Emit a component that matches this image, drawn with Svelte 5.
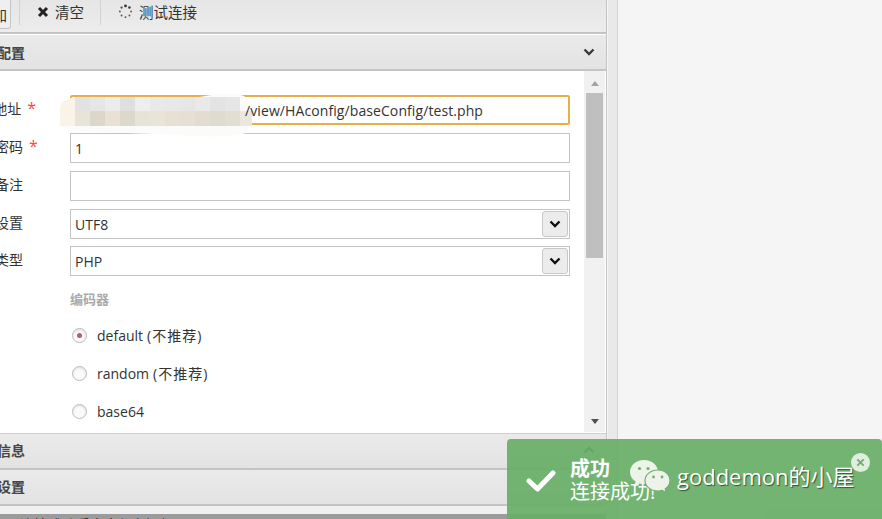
<script>
  const fields = [
    { label: 'URL地址', required: true, value: '', focus: true },
    { label: '连接密码', required: true, value: '1' },
    { label: '网站备注', value: '' },
  ];
  const selects = [
    { label: '编码设置', value: 'UTF8' },
    { label: '连接类型', value: 'PHP' },
  ];
  const encoders = [
    { name: 'default', note: '(不推荐)', checked: true },
    { name: 'random', note: '(不推荐)' },
    { name: 'base64' },
  ];
  // mosaic used to hide the address in the screenshot
  const top = ['#e2e2e2', '#e6e6e6', '#ececec', '#dfdfdf', '#eeeeee', '#e9e9e9', '#e8e8e8', '#e6e6e6', '#e9e9e9', '#e3e3e3', '#e6e6e6'];
  const bottom = ['#e8e4da', '#ddd7cb', '#e8e1d4', '#ddd8cc', '#e8e3d8', '#e9e4d8', '#e7e1d4', '#e6e0d4', '#e3ddd1', '#e0dbcf', '#e3ded2', '#ebe7de'];
</script>

{#snippet chevron(color, up)}
  <svg class="chev" class:up viewBox="0 0 12 8" width="12" height="8"><path d="M1.5 1.5 L6 6 L10.5 1.5" fill="none" stroke={color} stroke-width="2.4" /></svg>
{/snippet}

<div class="page">
  <div class="panel">
    <div class="toolbar">
      <button class="tool first">保存添加</button>
      <span class="sep"></span>
      <button class="tool">
        <svg viewBox="0 0 12 12" width="12" height="12"><path d="M2 2 L10 10 M10 2 L2 10" stroke="#222" stroke-width="3" /></svg>
        清空
      </button>
      <span class="sep"></span>
      <button class="tool">
        <svg viewBox="0 0 16 16" width="15" height="15">
          <circle cx="8" cy="2" r="1.5" fill="#333" /><circle cx="12.2" cy="3.8" r="1.3" fill="#333" />
          <circle cx="14" cy="8" r="1" fill="#555" /><circle cx="12.2" cy="12.2" r="1" fill="#555" />
          <circle cx="8" cy="14" r="1" fill="#555" /><circle cx="3.8" cy="12.2" r="1" fill="#555" />
          <circle cx="2" cy="8" r="1" fill="#555" /><circle cx="3.8" cy="3.8" r="1.2" fill="#444" />
        </svg>
        测试连接
      </button>
    </div>

    <div class="head open"><span>基础配置</span>{@render chevron('#3a3a3a', false)}</div>

    <div class="body">
      <div class="form">
        {#each fields as f}
          <div class="row">
            <label>{f.label}{#if f.required}<i>*</i>{/if}</label>
            <input class:focus={f.focus} value={f.value} />
          </div>
        {/each}
        {#each selects as s}
          <div class="row">
            <label>{s.label}</label>
            <div class="select">
              <span>{s.value}</span>
              <span class="drop">{@render chevron('#111', false)}</span>
            </div>
          </div>
        {/each}
        <div class="group">
          <div class="group-title">编码器</div>
          {#each encoders as e}
            <div class="radio">
              <span class="dot" class:on={e.checked}></span>
              <span>{e.name}{#if e.note}<span class="note">{e.note}</span>{/if}</span>
            </div>
          {/each}
        </div>
      </div>
      <div class="scroll">
        <span class="arrow up"></span>
        <span class="thumb"></span>
        <span class="arrow down"></span>
      </div>
    </div>

    <div class="head other"><span>其他信息</span>{@render chevron('#3a3a3a', true)}</div>
    <div class="head second"><span>高级设置</span></div>
    <div class="strip"></div>
    <div class="footer">连接成功后点击保存添加</div>
  </div>

  <div class="gutter"></div>

  <svg class="mosaic" viewBox="0 0 192 50" width="192" height="50">
    <path d="M6 8 Q0 8 0 14 L0 32 Q6 38 40 39 L120 42 Q170 46 186 40 Q191 36 191 28 L191 14 Q190 2 175 1 Q160 0 140 4 L60 4 L15 4 Z" fill="#fbfbfa" />
    <path d="M0 14 Q2 6 15 4 L15 33 L0 33 Z" fill="#faf4e8" />
    {#each top as c, i}
      <rect x={15 + i * 15} y="4" width="15" height="14" fill={c} />
    {/each}
    {#each bottom as c, i}
      <rect x={15 + i * 15} y="18" width="15" height="15" fill={c} />
    {/each}
  </svg>
  <div class="url">/view/HAconfig/baseConfig/test.php</div>

  <div class="toast">
    <svg class="check" viewBox="0 0 30 24" width="30" height="24"><path d="M3 12 L11.5 20 L27 4" fill="none" stroke="#fff" stroke-width="5" stroke-linecap="round" stroke-linejoin="round" /></svg>
    <div class="msg">
      <strong>成功</strong>
      <span>连接成功!</span>
    </div>
    <span class="close">
      <svg viewBox="0 0 10 10" width="9" height="9"><path d="M1.5 1.5 L8.5 8.5 M8.5 1.5 L1.5 8.5" stroke="#6fb06f" stroke-width="2.2" /></svg>
    </span>
  </div>

  <div class="mark">
    <svg viewBox="0 0 40 34" width="40" height="34">
      <path d="M14 1 C6 1 0 6.5 0 13 C0 17 2.2 20.4 5.6 22.6 L4.4 27 L9.6 24.4 C11 24.8 12.4 25 14 25 C22 25 28 19.5 28 13 C28 6.5 22 1 14 1 Z" fill="#eef3ea" />
      <circle cx="9.5" cy="9.5" r="1.6" fill="#6fb06f" /><circle cx="18" cy="9.5" r="1.6" fill="#6fb06f" />
      <path d="M28 11 C20.6 11 15 15.8 15 21.5 C15 27.2 20.6 32 28 32 C29.4 32 30.8 31.8 32 31.4 L36.4 33.6 L35.2 30 C38 28 40 25 40 21.5 C40 15.8 35 11 28 11 Z" fill="#eef3ea" stroke="#6fb06f" stroke-width="1.2" />
      <circle cx="23.5" cy="18" r="1.4" fill="#6fb06f" /><circle cx="32" cy="18" r="1.4" fill="#6fb06f" />
    </svg>
    <span>goddemon的小屋</span>
  </div>
</div>

<style>
  :global(body) { margin: 0; }

  .page {
    position: relative;
    display: flex;
    width: 882px;
    height: 519px;
    overflow: hidden;
    background: #f5f5f5;
    font-family: "Open Sans", "Noto Sans CJK SC", sans-serif;
    font-size: 14px;
    color: #333;
  }

  .panel {
    flex: none;
    width: 647px;
    margin-left: -40px;
    display: flex;
    flex-direction: column;
    background: #fff;
    border-right: 1px solid #c4c4c4;
    box-sizing: border-box;
  }

  .gutter {
    flex: none;
    width: 9px;
    background: #e9e9e9;
    border-right: 1px solid #d4d4d4;
    margin-left: 1px;
  }

  .toolbar {
    height: 34px;
    box-sizing: border-box;
    display: flex;
    align-items: flex-start;
    background: linear-gradient(#e6e6e6, #ececec);
    border-bottom: 2px solid #c4c4c4;
    flex: none;
  }

  .tool {
    display: flex;
    align-items: center;
    gap: 6px;
    height: 23px;
    border: 0;
    background: none;
    padding: 0;
    font: inherit;
    font-size: 14.5px;
    color: #333;
  }
  .tool.first {
    width: 51px;
    height: 29px;
    border: 1px solid #c4c4c4;
    border-top: 0;
    border-radius: 0 0 3px 3px;
    padding-right: 3px;
    overflow: hidden;
    white-space: nowrap;
    justify-content: flex-end;
    background: #efefef;
  }

  .sep { width: 1px; height: 25px; background: #cfd3d3; margin-left: 8px; }
  .sep + .tool { margin-left: 17px; }
  .tool + .sep + .tool + .sep { margin-left: 16px; }

  .head {
    flex: none;
    height: 37px;
    padding: 0 11px 2px 9px;
    box-sizing: border-box;
    display: flex;
    align-items: center;
    justify-content: space-between;
    background: linear-gradient(#eaeaea, #e3e3e3);
    border-bottom: 2px solid #c4c4c4;
    font-weight: 700;
    color: #444;
  }
  .head.open { height: 36px; margin-top: 1px; padding-bottom: 0; }
  .head.other { margin-top: 1px; border-top: 1px solid #d0d0d0; }
  .head.second { height: 36px; }

  .chev.up { transform: rotate(180deg); }

  .body {
    flex: none;
    height: 361px;
    display: flex;
    overflow: hidden;
  }

  .form {
    width: 624px;
    padding: 24px 0 0 7px;
    box-sizing: border-box;
    flex: none;
  }

  .row {
    display: flex;
    align-items: center;
    height: 30px;
    margin-bottom: 8px;
  }
  .row:nth-child(4) { margin-bottom: 7px; }
  .row label { width: 103px; flex: none; white-space: nowrap; margin-top: -4px; }
  .row label i { color: #f44; font-style: normal; margin-left: 6px; font-size: 16px; }

  .row input, .select {
    width: 500px;
    height: 30px;
    box-sizing: border-box;
    border: 1px solid #c4c4c4;
    background: #fff;
    padding: 0 4px;
    font: inherit;
    color: #333;
    outline: 0;
  }
  .row input.focus { border: 2px solid #e8b04a; border-radius: 2px; }

  .select { display: flex; align-items: center; justify-content: space-between; padding-right: 1px; }
  .drop {
    width: 24px;
    height: 24px;
    display: flex;
    align-items: center;
    justify-content: center;
    background: #ececec;
    border: 1px solid #c8c8c8;
    border-radius: 3px;
  }

  .group { padding-left: 103px; margin-top: 14px; }
  .group-title { font-weight: 700; color: #aaa; font-size: 13px; margin-bottom: 17px; line-height: 18px; }

  .radio { display: flex; align-items: center; gap: 10px; height: 20px; margin-bottom: 18px; padding-left: 2px; }
  .note { margin-left: 4px; letter-spacing: 1px; }
  .dot {
    width: 15px;
    height: 15px;
    box-sizing: border-box;
    border: 1px solid #bbb;
    border-radius: 50%;
    background: #fafafa;
    box-shadow: inset 0 1px 2px rgba(0, 0, 0, 0.12);
    position: relative;
  }
  .dot.on::after {
    content: '';
    position: absolute;
    left: 4px;
    top: 4px;
    width: 5px;
    height: 5px;
    border-radius: 50%;
    background: #b06060;
  }

  .scroll {
    width: 21px;
    flex: none;
    background: #f1f1f1;
    display: flex;
    flex-direction: column;
    align-items: center;
  }
  .thumb { width: 17px; height: 165px; background: #bfbfbf; margin-top: 7px; }
  .arrow { width: 0; height: 0; border-left: 4.5px solid transparent; border-right: 4.5px solid transparent; }
  .arrow.up { margin-top: 10px; border-bottom: 5px solid #a3a3a3; }
  .arrow.down { margin-top: 161px; border-top: 5px solid #505050; }

  .strip { flex: none; height: 8px; background: #f0f0f0; }
  .footer {
    flex: 1;
    background: #9b9b9b;
    color: #222;
    padding-left: 60px;
    line-height: 22px;
    white-space: nowrap;
  }

  .mosaic { position: absolute; left: 60px; top: 93px; }
  .url { position: absolute; left: 245px; top: 101px; line-height: 20px; letter-spacing: 0.09px; }

  .toast {
    position: absolute;
    left: 507px;
    top: 439px;
    width: 375px;
    height: 80px;
    box-sizing: border-box;
    border-radius: 4px 4px 0 0;
    background: rgba(104, 174, 104, 0.93);
    color: #fff;
    display: flex;
    align-items: flex-start;
    padding: 30px 0 0 19px;
  }
  .check { margin-right: 14px; }
  .msg { display: flex; flex-direction: column; margin-top: -12px; font-size: 20px; line-height: 23px; white-space: nowrap; }
  .msg strong { font-weight: 700; }

  .close {
    position: absolute;
    left: 344px;
    top: 14px;
    width: 19px;
    height: 19px;
    border-radius: 50%;
    background: #dfeedd;
    display: flex;
    align-items: center;
    justify-content: center;
  }

  .mark {
    position: absolute;
    left: 630px;
    top: 459px;
    display: flex;
    align-items: center;
    gap: 7px;
    color: #fff;
    font-size: 22px;
    line-height: 34px;
    text-shadow: 1px 1px 1px rgba(0, 0, 0, 0.55);
  }
</style>
